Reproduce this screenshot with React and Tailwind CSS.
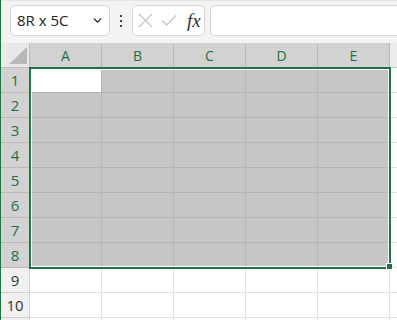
import { ChevronDown } from 'lucide-react';

const cols = ['A', 'B', 'C', 'D', 'E'];
const rows = [1, 2, 3, 4, 5, 6, 7, 8, 9, 10, 11];

const App = () => {
  return (
    <div className="w-[397px] h-[320px] overflow-hidden bg-white border-l border-[#217346] font-['Open_Sans','Noto_Sans',sans-serif]">
      {/* formula bar */}
      <div className="h-[43px] bg-[#f3f3f3] border-t border-[#e4e4e4] flex items-start pt-[4px] pl-[9px]">
        <div className="w-[100px] h-[31px] bg-white border border-[#d6d6d6] rounded-[5px] flex items-center justify-between pl-[6px] pr-[5px]">
          <span className="text-[15px] text-[#242424]">8R x 5C</span>
          <ChevronDown size={13} strokeWidth={2.6} className="text-[#242424]" />
        </div>
        <div className="w-[22px] h-[31px] flex flex-col items-center justify-center gap-[3px]">
          <span className="w-[2px] h-[2px] bg-[#444]" />
          <span className="w-[2px] h-[2px] bg-[#444]" />
          <span className="w-[2px] h-[2px] bg-[#444]" />
        </div>
        <div className="w-[73px] h-[31px] bg-white border border-[#d6d6d6] rounded-[5px] flex items-center pl-[5px] gap-[8px]">
          <svg width="15" height="15" viewBox="0 0 15 15">
            <path d="M1 1L14 14M14 1L1 14" stroke="#c6c6c6" strokeWidth="1.3" fill="none" />
          </svg>
          <svg width="16" height="13" viewBox="0 0 16 13">
            <path d="M1 6.5L5.5 11L15 1.5" stroke="#c6c6c6" strokeWidth="1.3" fill="none" />
          </svg>
          <span className="ml-[2px] text-[19px] leading-none italic text-[#333] font-['Liberation_Serif',serif]">fx</span>
        </div>
        <div className="ml-[5px] flex-1 h-[31px] bg-white border border-[#d6d6d6] rounded-l-[5px] border-r-0" />
      </div>

      {/* sheet */}
      <div className="relative grid grid-cols-[29px_repeat(5,72px)_1fr] grid-rows-[25px_repeat(11,25px)]">
        <div className="relative bg-[#e9e9e9] border-r border-b border-[#bdbdbd]">
          <svg className="absolute left-[8px] top-[4px]" width="18" height="17" viewBox="0 0 18 17">
            <polygon points="0,17 18,17 18,0" fill="#b8b8b8" />
          </svg>
        </div>
        {cols.map((c) => (
          <div
            key={c}
            className="bg-[#d2d2d2] border-r border-b border-[#b9b9b9] flex items-center justify-center text-[14px] text-[#1f6e43]"
          >
            {c}
          </div>
        ))}
        <div className="bg-[#ececec] border-b border-[#c8c8c8]" />

        {rows.map((r) => {
          const sel = r <= 8;
          return [
            <div
              key={`h${r}`}
              className={
                sel
                  ? 'bg-[#d2d2d2] border-r border-b border-[#b9b9b9] flex items-center justify-center text-[15px] text-[#1f6e43]'
                  : 'bg-[#f0f0f0] border-r border-b border-[#cfcfcf] flex items-center justify-center text-[15px] text-[#333]'
              }
            >
              {r <= 10 ? r : ''}
            </div>,
            ...cols.map((c) => (
              <div
                key={`${c}${r}`}
                className={
                  r === 1 && c === 'A'
                    ? 'bg-white border-r border-b border-[#b4b4b4]'
                    : sel
                    ? 'bg-[#c6c6c6] border-r border-b border-[#b4b4b4]'
                    : 'bg-white border-r border-b border-[#e1e1e1]'
                }
              />
            )),
            <div key={`x${r}`} className="bg-white border-b border-[#e1e1e1]" />,
          ];
        })}

        {/* selection */}
        <div className="absolute left-[28px] top-[24px] w-[362px] h-[202px] border-2 border-[#217346]">
          <div className="w-full h-full border border-white" />
        </div>
        <div className="absolute left-[385px] top-[220px] w-[7px] h-[7px] bg-[#217346] border border-white" />
      </div>
    </div>
  );
};

export default App;
